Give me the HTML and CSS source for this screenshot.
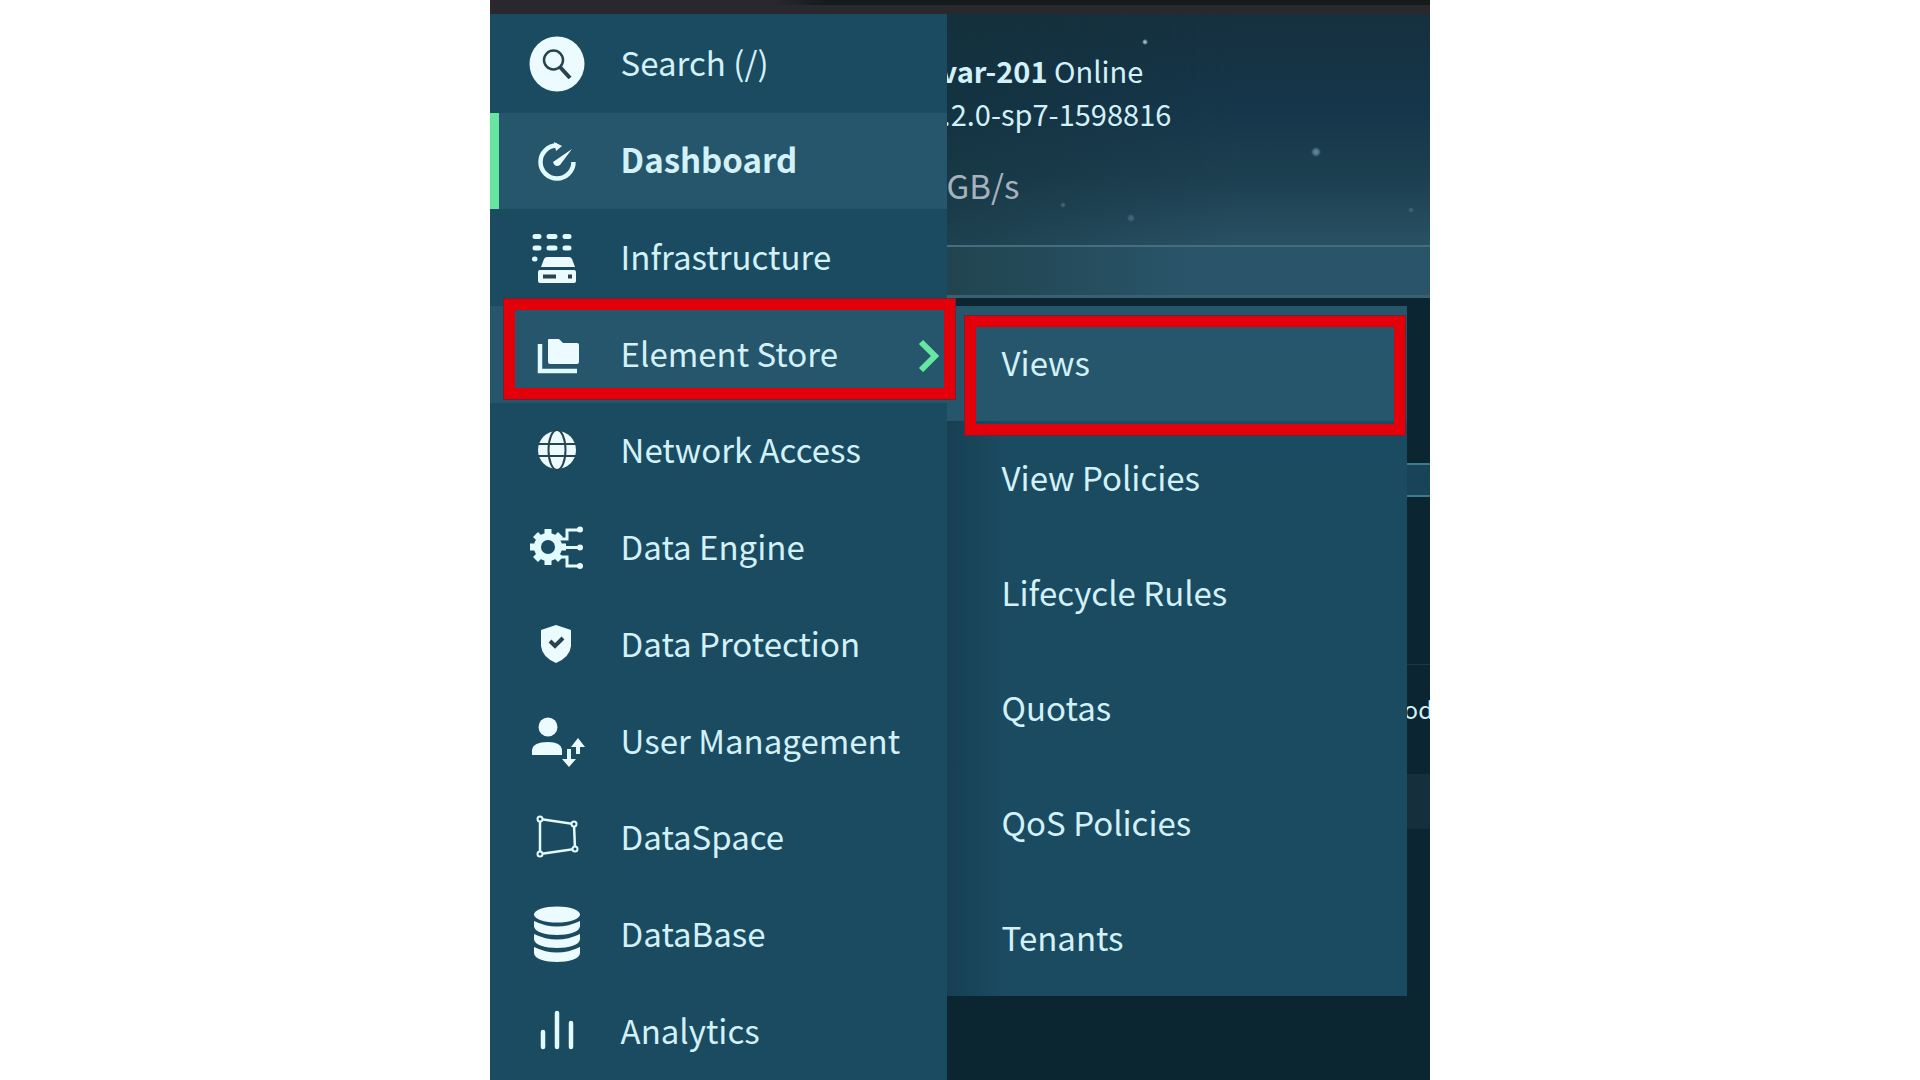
FILE: index.html
```
<!DOCTYPE html>
<html lang="en">
<head>
  <meta charset="UTF-8">
  <meta name="viewport" content="width=device-width, initial-scale=1.0">
  <title>Element Store - Views</title>
  <link rel="stylesheet" href="styles.css">
</head>
<body>
  <div class="frame">
    <div class="browser-bar"></div>
    <div class="app">
      <nav class="sidebar">
        <ul class="menu">
          <li class="menu-item">
            <a href="#search">
              <svg class="icon" viewBox="0 0 60 60">
                <circle cx="30" cy="30" r="27.5"/>
                <g class="cut-line" stroke-width="2.5"><circle cx="26.500" cy="26" r="9.5"/><path d="M33 33L43 44" stroke-width="4"/></g>
              </svg>
              <span>Search (/)</span>
            </a>
          </li>
          <li class="menu-item active">
            <a href="#dashboard">
              <svg class="icon" viewBox="0 0 60 60">
                <path class="line" stroke-width="4.5" d="M30 14.5A16.500 16.500 0 1 0 46.500 31"/>
                <path d="M27 11L35 15L29 20zM26 31L45 18L33 34Q28 37 26 31z"/>
              </svg>
              <span>Dashboard</span>
            </a>
          </li>
          <li class="menu-item">
            <a href="#infrastructure">
              <svg class="icon" viewBox="0 0 60 60">
                <path class="line" stroke-width="5" stroke-linecap="round" d="M8 8.500H12M22 8.500H28M38 8.500H42M8 20H12M22 20H28M38 20H42M7.500 31H8"/>
                <path d="M20 29H42Q44 29 45 31L48 39H14L17 31Q18 29 20 29z"/>
                <rect x="11" y="42" width="38" height="13" rx="2"/>
                <path class="cut-line" stroke-width="4" d="M16 48.500H29M41 48.500H45"/>
              </svg>
              <span>Infrastructure</span>
            </a>
          </li>
          <li class="menu-item open">
            <a href="#element-store">
              <svg class="icon" viewBox="0 0 60 60">
                <path class="line" stroke-width="4.5" d="M13 19V46H50"/>
                <path d="M22 14H32L36 18H50Q52 18 52 20V37Q52 39 50 39H23Q21 39 21 37V15Q21 14 22 14z"/>
              </svg>
              <span>Element Store</span>
              <svg class="chevron" viewBox="0 0 22 34"><path d="M3 4L17 18L3 32"/></svg>
            </a>
            <ul class="submenu">
              <li class="current"><a href="#views">Views</a></li>
              <li><a href="#view-policies">View Policies</a></li>
              <li><a href="#lifecycle-rules">Lifecycle Rules</a></li>
              <li><a href="#quotas">Quotas</a></li>
              <li><a href="#qos-policies">QoS Policies</a></li>
              <li><a href="#tenants">Tenants</a></li>
            </ul>
          </li>
          <li class="menu-item">
            <a href="#network-access">
              <svg class="icon" viewBox="0 0 60 60">
                <circle cx="30" cy="29" r="19"/>
                <g class="cut-line" stroke-width="2"><ellipse cx="30" cy="29" rx="8.500" ry="20"/><path d="M11 23H49M11 35H49"/></g>
              </svg>
              <span>Network Access</span>
            </a>
          </li>
          <li class="menu-item">
            <a href="#data-engine">
              <svg class="icon" viewBox="0 0 60 60">
                <circle class="line" cx="21" cy="29" r="10.500" stroke-width="7"/>
                <path class="line" stroke-width="7" d="M21 17V11M21 41V47M9 29H3M33 29H39M12.500 20.500L8.500 16.500M29.500 20.500L33.500 16.500M12.500 37.500L8.500 41.500M29.500 37.500L33.500 41.500"/>
                <path class="line" stroke-width="3" d="M33 21H40V12H54M38 29.500H54M33 39H40V48H54"/>
                <circle cx="53" cy="11.500" r="3"/><circle cx="53" cy="29.500" r="3"/><circle cx="53" cy="48" r="3"/>
              </svg>
              <span>Data Engine</span>
            </a>
          </li>
          <li class="menu-item">
            <a href="#data-protection">
              <svg class="icon" viewBox="0 0 60 60">
                <path d="M29 10L44 15V31Q43 42 29 48Q15 42 14 31V15z"/>
                <path class="cut-line" stroke-width="4" d="M23 26L28 31L36 23"/>
              </svg>
              <span>Data Protection</span>
            </a>
          </li>
          <li class="menu-item">
            <a href="#user-management">
              <svg class="icon" viewBox="0 0 60 60">
                <circle cx="21" cy="15" r="9.500"/>
                <path d="M5 43V38Q6 30 21 30Q34 30 35 38V43z"/>
                <path class="line" stroke-width="4" d="M51 42V31M42 37V49"/>
                <path d="M51 26L58 35H44zM42 55L35 47H49z"/>
              </svg>
              <span>User Management</span>
            </a>
          </li>
          <li class="menu-item">
            <a href="#dataspace">
              <svg class="icon" viewBox="0 0 60 60">
                <path class="line" stroke-width="2.5" d="M13 11L47 16L48 41L13 46z"/>
                <g class="node"><circle cx="13" cy="11" r="2.5"/><circle cx="47" cy="16" r="2.5"/><circle cx="48" cy="41" r="2.5"/><circle cx="13" cy="46" r="2.5"/></g>
              </svg>
              <span>DataSpace</span>
            </a>
          </li>
          <li class="menu-item">
            <a href="#database">
              <svg class="icon" viewBox="0 0 60 60">
                <ellipse cx="30" cy="9.500" rx="23" ry="8"/>
                <path d="M7 16Q30 27 53 16V21C53 33 7 33 7 21zM7 29Q30 40 53 29V34C53 46 7 46 7 34zM7 42Q30 53 53 42V48C53 60 7 60 7 48z"/>
              </svg>
              <span>DataBase</span>
            </a>
          </li>
          <li class="menu-item">
            <a href="#analytics">
              <svg class="icon" viewBox="0 0 60 60">
                <path class="line" stroke-width="4.500" stroke-linecap="round" d="M16 30V45M30 11V45M44 21V45"/>
              </svg>
              <span>Analytics</span>
            </a>
          </li>
        </ul>
      </nav>

      <main class="content">
        <header class="status">
          <div class="cluster">
            <p><b>var-201</b> Online</p>
            <p>.2.0-sp7-1598816</p>
          </div>
          <p class="rate">GB/s</p>
        </header>
        <div class="toolbar"></div>
        <div class="tab-strip"></div>
        <div class="table-head"></div>
        <div class="table-row"><span>od</span></div>
        <div class="table-row shaded"></div>
      </main>
    </div>

    <!-- highlights for the two steps -->
    <div class="callout callout-menu"></div>
    <div class="callout callout-submenu"></div>
  </div>
</body>
</html>
```
FILE: styles.css
```
* {
  box-sizing: border-box;
}
body {
  margin: 0;
  background-color: #fff;
  color: #d2f1f8;
  font-family: "Noto Sans CJK SC", "Noto Sans", sans-serif;
  font-size: 33px;
  line-height: 40px;
}
ul, p {
  margin: 0;
  padding: 0;
  list-style: none;
}
a {
  color: inherit;
  text-decoration: none;
}
.frame {
  position: relative;
  display: flex;
  flex-direction: column;
  width: 49vw;
  min-width: 940px;
  height: 100vh;
  margin: 0 auto;
  overflow: hidden;
}
.browser-bar {
  height: 14px;
  background: linear-gradient(to right, transparent 30%, #151a1b 36%) top / 100% 5px no-repeat #29282c;
}
.app {
  flex: 1;
  display: flex;
  min-height: 0;
}

/* sidebar */
.sidebar {
  position: relative;
  z-index: 1;
  width: 457px;
  padding-top: 2px;
  background-color: #1b4b61;
}
.menu {
  display: flex;
  flex-direction: column;
  height: 100%;
}
.menu-item {
  position: relative;
  flex: 1;
  display: flex;
  min-height: 0;
}
.menu-item > a {
  flex: 1;
  display: flex;
  align-items: center;
  gap: 34px;
  padding-left: 37px;
}
.menu-item span {
  padding-bottom: 4px;
}
.active, .open {
  background-color: #25566b;
}
.active {
  font-weight: bold;
}
.active::before {
  content: "";
  position: absolute;
  width: 9px;
  height: 100%;
  background-color: #66e6a0;
}
.icon {
  width: 60px;
  height: 60px;
  fill: #ebfbff;
}
.icon .line {
  fill: none;
  stroke: #e2fbff;
}
.icon .cut-line {
  fill: none;
  stroke: #26434f;
}
.icon .node {
  fill: #1b4b61;
  stroke: #e2fbff;
  stroke-width: 2;
}
.chevron {
  width: 22px;
  height: 34px;
  margin-left: auto;
  margin-right: 7px;
  fill: none;
  stroke: #66e6a0;
  stroke-width: 6;
}

/* flyout */
.submenu {
  position: absolute;
  left: 100%;
  top: 0;
  width: 460px;
  background: linear-gradient(to right, #173f53, #1b4b61 56px);
}
.submenu a {
  display: block;
  padding: 36px 55px 39px;
}
.submenu .current {
  background-color: #25566b;
}

/* page behind the menu */
.content {
  flex: 1;
  min-width: 0;
  overflow: hidden;
  background-color: #0b2531;
}
.status {
  height: 233px;
  padding-top: 35px;
  border-bottom: 2px solid #456f7f;
  background:
    radial-gradient(circle at 198px 28px, #9dbac4 1px, transparent 3px),
    radial-gradient(circle at 369px 138px, #5b8290 2px, transparent 5px),
    radial-gradient(circle at 184px 204px, #3d6573 2px, transparent 4px),
    radial-gradient(circle at 116px 191px, #3d6573 1px, transparent 3px),
    radial-gradient(circle at 464px 196px, #3d6573 1px, transparent 3px),
    linear-gradient(to right, rgba(18, 48, 58, 0.5), transparent 60%),
    linear-gradient(#16303f, #15364a 40%, #1c3f50 70%, #295164);
}
.cluster {
  margin-left: -6px;
  font-size: 29px;
  line-height: 43px;
}
.cluster p + p {
  padding-left: 2px;
}
.rate {
  padding-top: 30px;
  color: #a7b2bd;
}
.toolbar {
  height: 51px;
  border-bottom: 3px solid #3b6071;
  background: linear-gradient(to right, #21444f, #295469 50%);
}
.tab-strip {
  height: 34px;
  margin-top: 165px;
  border: solid #3e7a90;
  border-width: 2px 0;
  background-color: #194356;
}
.table-head {
  height: 168px;
  border-bottom: 1px solid #17384a;
}
.table-row {
  height: 109px;
  padding: 24px 0 0 457px;
  font-size: 24px;
}
.table-row.shaded {
  height: 55px;
  background-color: #162f3d;
}

/* red boxes */
.callout {
  position: absolute;
  border: 11px solid #e3000b;
  outline: 1px solid #6b2430;
  pointer-events: none;
  z-index: 2;
}
.callout-menu {
  left: 14px;
  top: 299px;
  width: 451px;
  height: 100px;
}
.callout-submenu {
  left: 475px;
  top: 316px;
  width: 440px;
  height: 119px;
}
```
